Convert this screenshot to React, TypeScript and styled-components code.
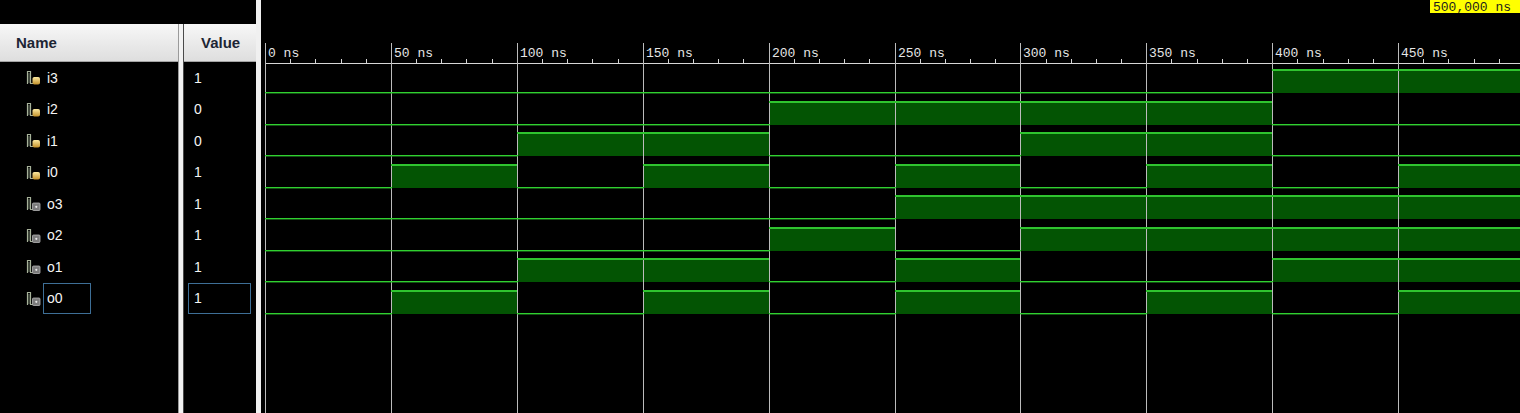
import React from "react";
import styled, { createGlobalStyle } from "styled-components";

const GlobalStyle = createGlobalStyle`
  *, *::before, *::after { box-sizing: border-box; }
  html, body { margin: 0; padding: 0; background: #000; }
  body { font-family: "Liberation Sans", Arial, sans-serif; }
`;

type Signal = {
  name: string;
  kind: "in" | "out";
  bits: number[];
};

// one bit per 50 ns step, 0..500 ns
const signals: Signal[] = [
  { name: "i3", kind: "in", bits: [0, 0, 0, 0, 0, 0, 0, 0, 1, 1] },
  { name: "i2", kind: "in", bits: [0, 0, 0, 0, 1, 1, 1, 1, 0, 0] },
  { name: "i1", kind: "in", bits: [0, 0, 1, 1, 0, 0, 1, 1, 0, 0] },
  { name: "i0", kind: "in", bits: [0, 1, 0, 1, 0, 1, 0, 1, 0, 1] },
  { name: "o3", kind: "out", bits: [0, 0, 0, 0, 0, 1, 1, 1, 1, 1] },
  { name: "o2", kind: "out", bits: [0, 0, 0, 0, 1, 0, 1, 1, 1, 1] },
  { name: "o1", kind: "out", bits: [0, 0, 1, 1, 0, 1, 0, 0, 1, 1] },
  { name: "o0", kind: "out", bits: [0, 1, 0, 1, 0, 1, 0, 1, 0, 1] },
];

const SELECTED = "o0";
const ROW_H = 31.5;
const ROWS_TOP = 62;
const WAVE_LEFT = 261;
const WAVE_W = 1520 - WAVE_LEFT;
const STEP_PX = 125.9;
const ZERO_X = 265 - WAVE_LEFT;

const Screen = styled.div`
  display: flex;
  width: 1520px;
  height: 413px;
  background: #000;
  overflow: hidden;
`;

const Column = styled.div<{ $width: number }>`
  width: ${(p) => p.$width}px;
  flex-shrink: 0;
  display: flex;
  flex-direction: column;
`;

const TopStrip = styled.div`
  height: 24px;
`;

const HeaderCell = styled.div<{ $pad: number }>`
  height: 38px;
  display: flex;
  align-items: center;
  padding-left: ${(p) => p.$pad}px;
  background: linear-gradient(#f7f7f7, #dedede);
  border-bottom: 1px solid #a4a4a4;
  color: #1d2534;
  font-size: 15px;
  font-weight: bold;
`;

const ColumnDivider = styled.div`
  width: 6px;
  flex-shrink: 0;
  margin-top: 24px;
  background: #f2f2f2;
  border-left: 1px solid #9a9a9a;
  border-right: 1px solid #4a4a4a;
`;

const PaneSplitter = styled.div`
  width: 5px;
  flex-shrink: 0;
  background: #f0f0f0;
`;

const SignalRow = styled.div<{ $pad: number }>`
  height: ${ROW_H}px;
  display: flex;
  align-items: center;
  padding-left: ${(p) => p.$pad}px;
  color: #f4f4f4;
  font-size: 14px;
`;

const NameLabel = styled.div<{ $selected: boolean }>`
  height: 31px;
  min-width: 48px;
  margin-left: 2px;
  padding: 0 3px;
  display: flex;
  align-items: center;
  border: 1px solid ${(p) => (p.$selected ? "#3e6f97" : "transparent")};
`;

const ValueLabel = styled.div<{ $selected: boolean }>`
  height: 31px;
  width: 63px;
  padding-left: 5px;
  display: flex;
  align-items: center;
  border: 1px solid ${(p) => (p.$selected ? "#3e6f97" : "transparent")};
`;

const WaveArea = styled.div`
  flex: 1;
  position: relative;
`;

function SignalIcon({ kind }: { kind: "in" | "out" }) {
  return (
    <svg width="15" height="15" viewBox="0 0 15 15">
      <defs>
        <linearGradient id="lockIn" x1="0" y1="0" x2="0" y2="1">
          <stop offset="0" stopColor="#fbe9a0" />
          <stop offset="1" stopColor="#c4912a" />
        </linearGradient>
      </defs>
      <path d="M1.5 14 V1.5 H4.5 V13.5 H7" stroke="#a7b29a" strokeWidth="1.2" fill="none" />
      <path d="M3 3 V13" stroke="#6f7a66" strokeWidth="1" fill="none" />
      {kind === "in" ? (
        <rect x="6.5" y="7" width="7.5" height="7.5" rx="1.8" fill="url(#lockIn)" />
      ) : (
        <>
          <rect x="6.5" y="7" width="7.5" height="7.5" rx="1" fill="#7c7c7c" stroke="#b4b4b4" strokeWidth="0.8" />
          <circle cx="10.3" cy="10.8" r="1.1" fill="#e8e8e8" />
        </>
      )}
    </svg>
  );
}

const stepX = (k: number) => Math.round(ZERO_X + k * STEP_PX);

function Waveforms() {
  const majors = Array.from({ length: 10 }, (_, k) => k);
  const minors: number[] = [];
  for (let j = 1; j < 50; j++) {
    if (j % 5 !== 0) minors.push(Math.round(ZERO_X + j * (STEP_PX / 5)) + 0.5);
  }

  return (
    <svg width={WAVE_W} height={413} style={{ display: "block" }}>
      {/* bars for high levels */}
      {signals.map((s, i) => {
        const top = ROWS_TOP + i * ROW_H;
        const hi = Math.round(top + 7);
        const lo = Math.round(top + 31);
        return s.bits.map((b, k) =>
          b ? (
            <rect
              key={`${s.name}-bar-${k}`}
              x={stepX(k)}
              y={hi}
              width={stepX(k + 1) - stepX(k)}
              height={lo - hi}
              fill="#035403"
            />
          ) : null
        );
      })}

      {/* ruler */}
      <line x1={ZERO_X} y1={63.5} x2={WAVE_W} y2={63.5} stroke="#d6d6d6" strokeWidth={1} />
      {minors.map((x) => (
        <line key={`minor-${x}`} x1={x} y1={59} x2={x} y2={63} stroke="#d6d6d6" strokeWidth={1} />
      ))}
      {majors.map((k) => (
        <line
          key={`major-${k}`}
          x1={stepX(k) + 0.5}
          y1={43}
          x2={stepX(k) + 0.5}
          y2={413}
          stroke="#bcbcbc"
          strokeWidth={1}
        />
      ))}
      {majors.map((k) => (
        <text
          key={`label-${k}`}
          x={stepX(k) + 3}
          y={57}
          fill="#e6e6e6"
          fontFamily="'Liberation Mono', 'DejaVu Sans Mono', monospace"
          fontSize={13}
        >
          {`${k * 50} ns`}
        </text>
      ))}

      {/* level lines */}
      {signals.map((s, i) => {
        const top = ROWS_TOP + i * ROW_H;
        const hi = Math.round(top + 7);
        const lo = Math.round(top + 31);
        return s.bits.map((b, k) => (
          <rect
            key={`${s.name}-line-${k}`}
            x={stepX(k)}
            y={b ? hi : lo - 1}
            width={stepX(k + 1) - stepX(k) + (b ? 0 : 1)}
            height={b ? 2 : 1.4}
            fill={b ? "#2fc42f" : "#30d030"}
          />
        ));
      })}

      {/* cursor time */}
      <rect x={1430 - WAVE_LEFT} y={0} width={90} height={13} fill="#ffff00" />
      <text
        x={1433 - WAVE_LEFT}
        y={11}
        fill="#1c1c1c"
        fontFamily="'Liberation Mono', 'DejaVu Sans Mono', monospace"
        fontSize={13}
      >
        500,000 ns
      </text>
    </svg>
  );
}

export default function App() {
  return (
    <>
      <GlobalStyle />
      <Screen>
        <Column $width={178}>
          <TopStrip />
          <HeaderCell $pad={16}>Name</HeaderCell>
          {signals.map((s) => (
            <SignalRow key={s.name} $pad={26}>
              <SignalIcon kind={s.kind} />
              <NameLabel $selected={s.name === SELECTED}>{s.name}</NameLabel>
            </SignalRow>
          ))}
        </Column>
        <ColumnDivider />
        <Column $width={72}>
          <TopStrip />
          <HeaderCell $pad={17}>Value</HeaderCell>
          {signals.map((s) => (
            <SignalRow key={s.name} $pad={4}>
              <ValueLabel $selected={s.name === SELECTED}>{s.bits[s.bits.length - 1]}</ValueLabel>
            </SignalRow>
          ))}
        </Column>
        <PaneSplitter />
        <WaveArea>
          <Waveforms />
        </WaveArea>
      </Screen>
    </>
  );
}
